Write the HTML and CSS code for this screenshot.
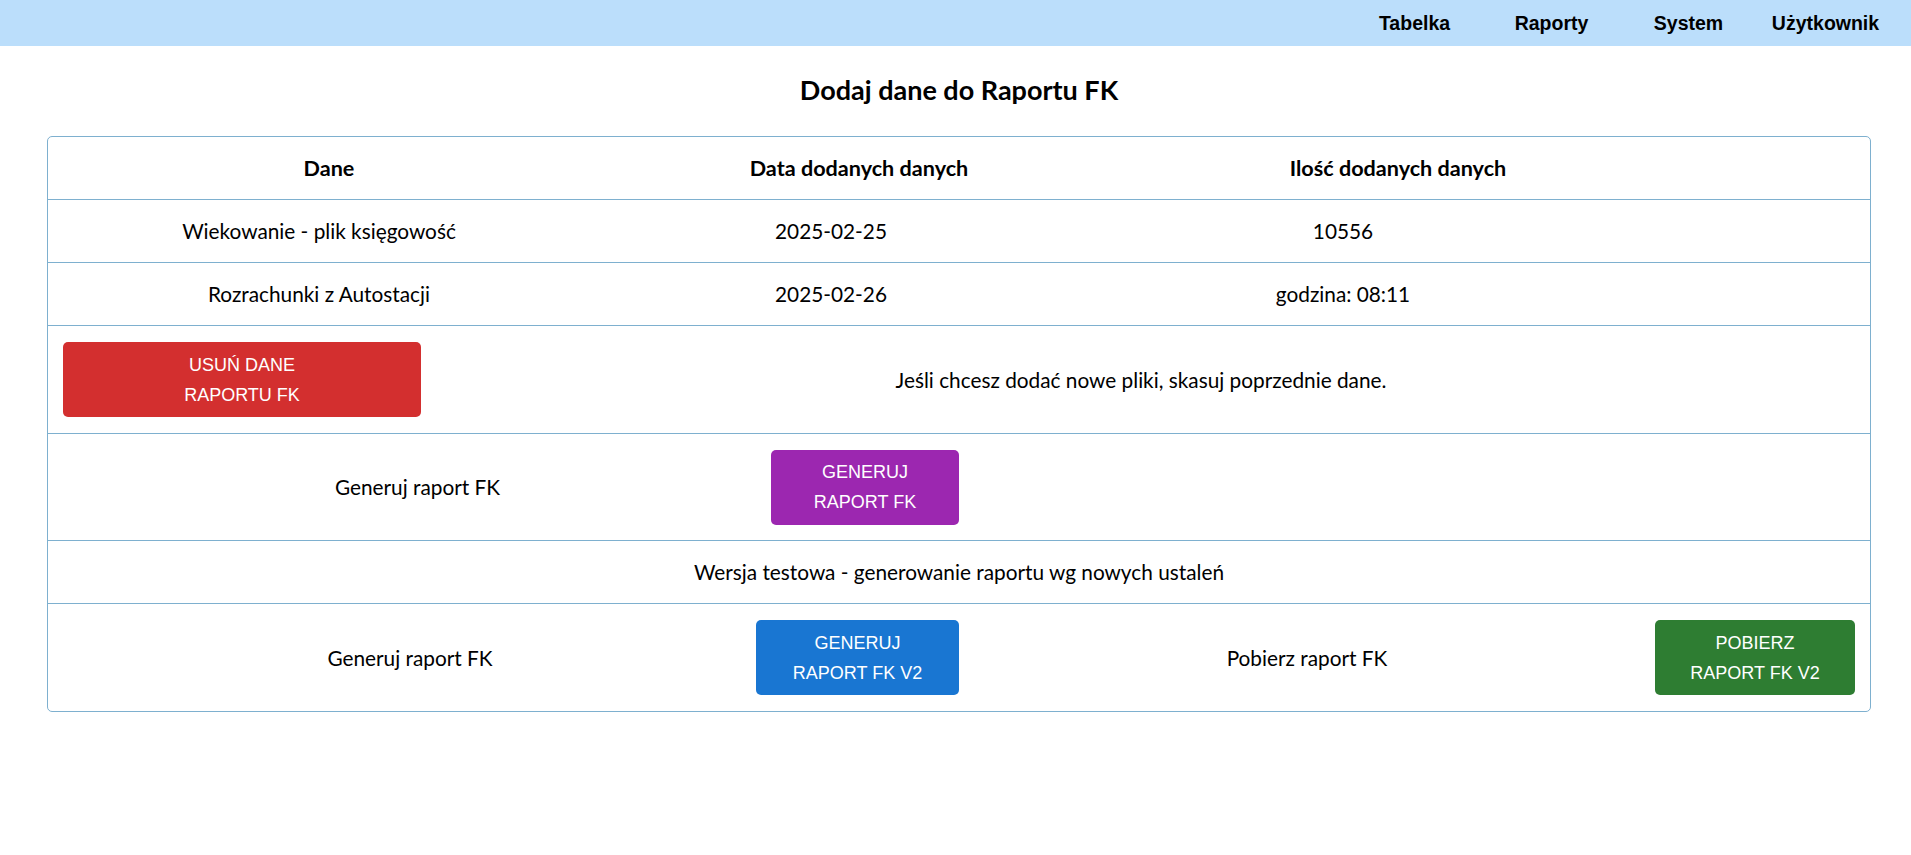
FILE: index.html
```html
<!DOCTYPE html>
<html lang="pl">
<head>
<meta charset="utf-8">
<title>Dodaj dane do Raportu FK</title>
<link rel="stylesheet" href="styles.css">
</head>
<body>
<header class="topbar">
  <nav class="menu">
    <a class="menu-item">Tabelka</a>
    <a class="menu-item">Raporty</a>
    <a class="menu-item">System</a>
    <a class="menu-item">Użytkownik</a>
  </nav>
</header>
<main class="page">
  <h1 class="title">Dodaj dane do Raportu FK</h1>
  <section class="panel">
    <div class="row row-head">
      <div class="cell">Dane</div>
      <div class="cell">Data dodanych danych</div>
      <div class="cell">Ilość dodanych danych</div>
      <div class="cell"></div>
    </div>
    <div class="row row-data">
      <div class="cell">Wiekowanie - plik księgowość</div>
      <div class="cell">2025-02-25</div>
      <div class="cell">10556</div>
      <div class="cell"></div>
    </div>
    <div class="row row-data">
      <div class="cell">Rozrachunki z Autostacji</div>
      <div class="cell">2025-02-26</div>
      <div class="cell">godzina: 08:11</div>
      <div class="cell"></div>
    </div>
    <div class="row row-delete">
      <button class="btn btn-red">USUŃ DANE<br>RAPORTU FK</button>
      <div class="cell">Jeśli chcesz dodać nowe pliki, skasuj poprzednie dane.</div>
      <div class="cell"></div>
    </div>
    <div class="row row-gen">
      <div class="cell">Generuj raport FK</div>
      <button class="btn btn-purple">GENERUJ<br>RAPORT FK</button>
      <div class="cell"></div>
    </div>
    <div class="row row-note">
      <div class="cell">Wersja testowa - generowanie raportu wg nowych ustaleń</div>
    </div>
    <div class="row row-v2">
      <div class="cell">Generuj raport FK</div>
      <button class="btn btn-blue">GENERUJ<br>RAPORT FK V2</button>
      <div class="cell">Pobierz raport FK</div>
      <button class="btn btn-green">POBIERZ<br>RAPORT FK V2</button>
      <div class="cell"></div>
    </div>
  </section>
</main>
</body>
</html>
```

FILE: styles.css
```css
* { box-sizing: border-box; }

body {
  margin: 0;
  font-family: "Lato", "Open Sans", sans-serif;
  color: #000;
  background: #fff;
}

.topbar {
  height: 46px;
  background: #bbdefb;
  display: flex;
  justify-content: flex-end;
  align-items: center;
  padding-right: 17px;
}

.menu {
  display: flex;
}

.menu-item {
  width: 137px;
  text-align: center;
  font-family: "Liberation Sans", Arial, sans-serif;
  font-weight: bold;
  font-size: 19.5px;
  color: #000;
  cursor: pointer;
}

.page {
  padding: 0 40px 0 47px;
}

.title {
  margin: 26px 0 28px;
  text-align: center;
  font-size: 27px;
  line-height: 36px;
  font-weight: 700;
}

.panel {
  width: 1824px;
  border: 1px solid #7eb0cf;
  border-radius: 5px;
}

.row {
  display: grid;
  align-items: center;
  border-top: 1px solid #7eb0cf;
  font-size: 20.8px;
  line-height: 30px;
}

.row:first-child { border-top: none; }

.cell {
  text-align: center;
}

.row-head {
  height: 62px;
  font-weight: 700;
  font-size: 21.6px;
  padding-left: 16px;
  grid-template-columns: 530px 530px 548px 1fr;
}

.row-data {
  height: 63px;
  padding-left: 15px;
  grid-template-columns: 512px 512px 512px 1fr;
}

.row-delete {
  height: 108px;
  padding-left: 15px;
  grid-template-columns: 358px 1440px 1fr;
}

.row-gen {
  height: 107px;
  padding-left: 16px;
  grid-template-columns: 707px 188px 1fr;
}

.row-note {
  height: 63px;
  grid-template-columns: 1fr;
}

.row-v2 {
  height: 108px;
  padding-left: 16px;
  grid-template-columns: 692px 203px 696px 200px 1fr;
}

.btn {
  height: 75px;
  border: none;
  border-radius: 5px;
  padding: 7px 8px;
  font-family: "Liberation Sans", Arial, sans-serif;
  font-size: 18px;
  line-height: 30px;
  color: #fff;
  text-align: center;
  cursor: pointer;
}

.btn-red { background: #d32f2f; }
.btn-purple { background: #9c27b0; }
.btn-blue { background: #1976d2; }
.btn-green { background: #2e7d32; }
```
